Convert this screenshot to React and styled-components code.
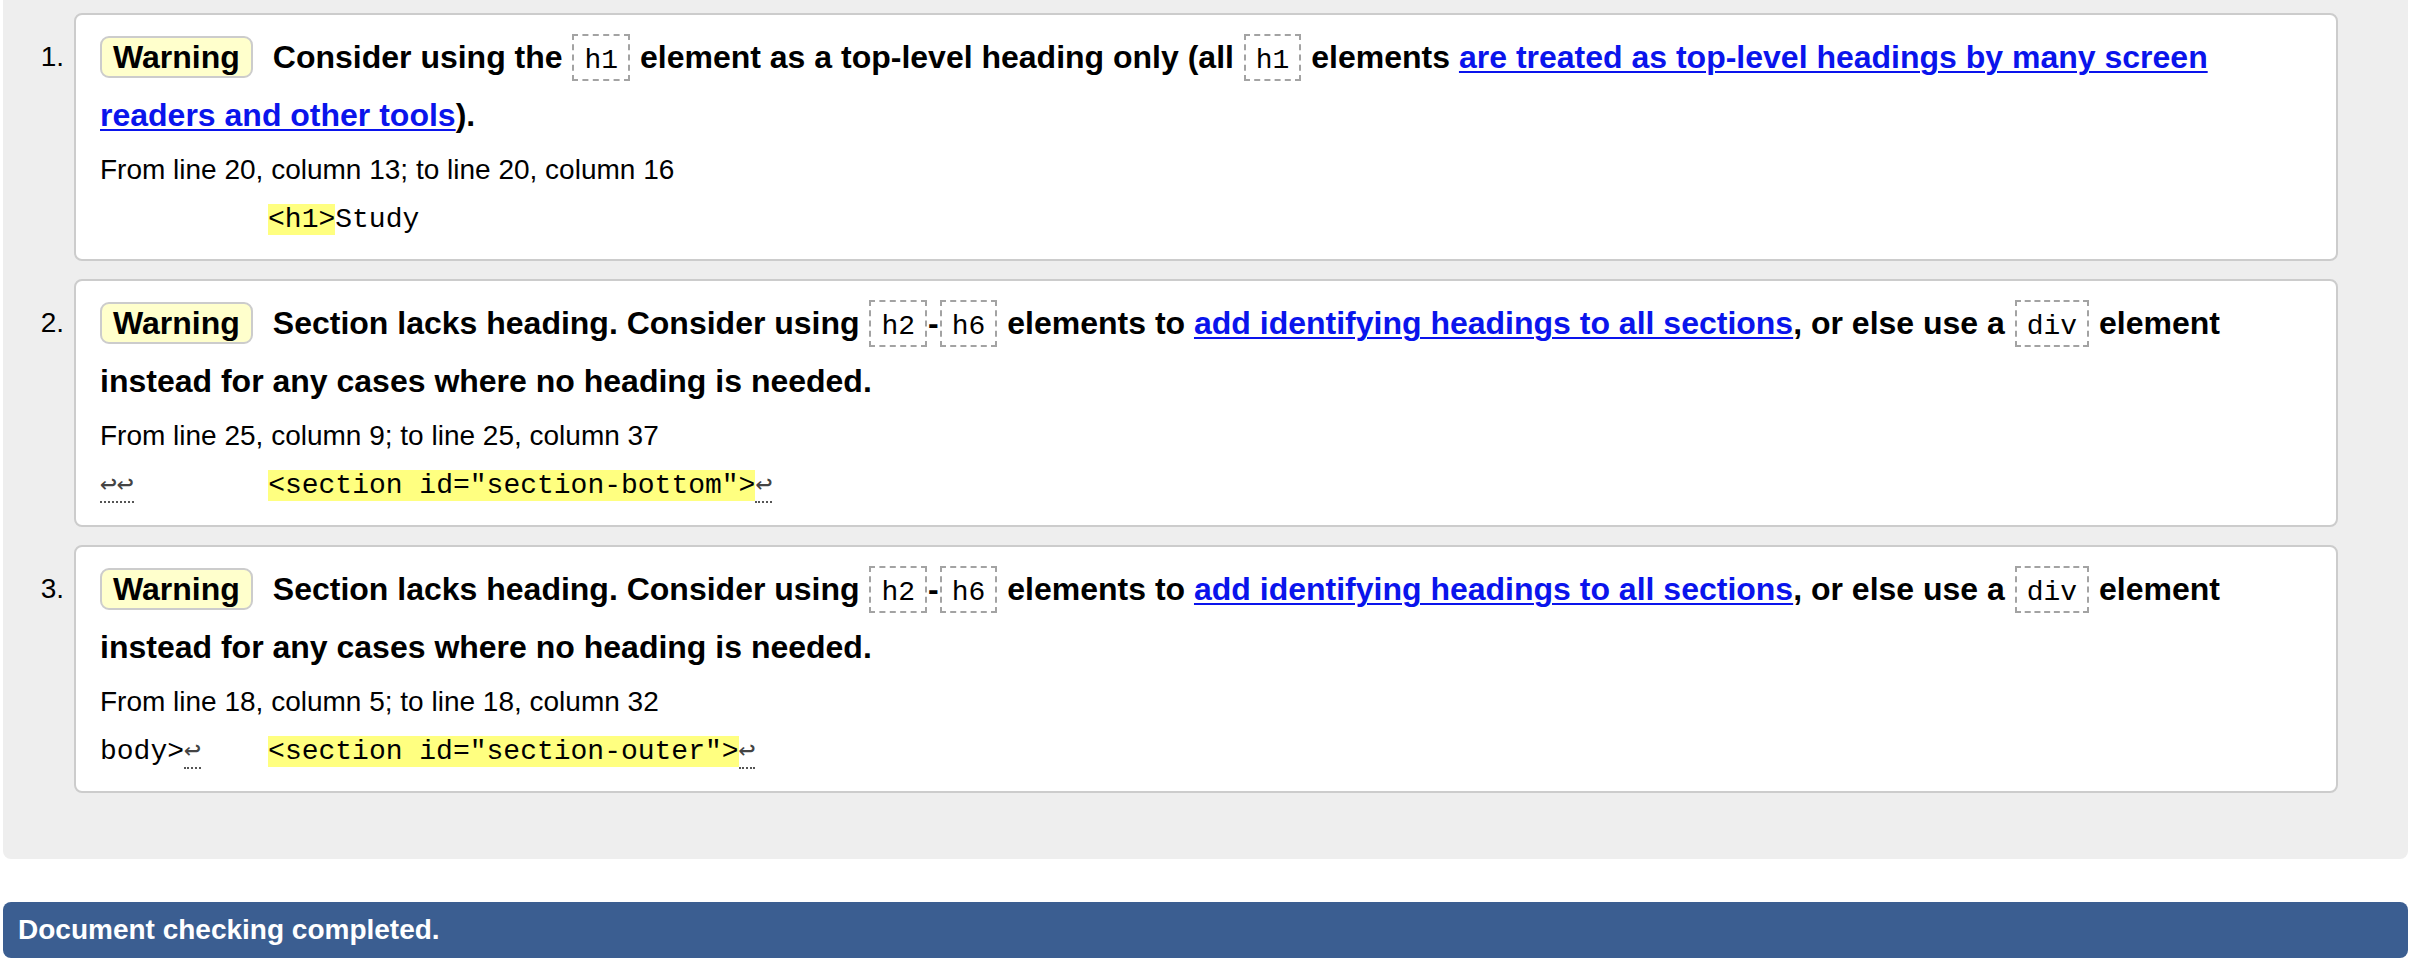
import React from "react";
import styled, { createGlobalStyle } from "styled-components";

const Global = createGlobalStyle`
  html, body { margin: 0; padding: 0; background: #fff; }
  body { font-family: "Liberation Sans", Arial, Helvetica, sans-serif; color: #000; }
`;

const Page = styled.div`
  display: flex;
  flex-direction: column;
  gap: 43px;
`;

const Panel = styled.section`
  margin: 0 4px 0 3px;
  background: #eeeeee;
  border-radius: 0 0 8px 8px;
  padding: 13px 70px 66px 0;
`;

const List = styled.ol`
  list-style: none;
  margin: 0;
  padding: 0;
  display: flex;
  flex-direction: column;
  gap: 18px;
`;

const Item = styled.li`
  display: flex;
  align-items: flex-start;
`;

const Num = styled.div`
  flex: 0 0 71px;
  box-sizing: border-box;
  padding: 15px 10px 0 0;
  text-align: right;
  font-size: 28px;
  line-height: 58px;
`;

const Card = styled.div`
  flex: 1;
  background: #fff;
  border: 2px solid #cccccc;
  border-radius: 8px;
  padding: 13px 40px 19px 24px;
`;

const Message = styled.p`
  margin: 0;
  font-size: 32px;
  font-weight: bold;
  line-height: 58px;
`;

const Badge = styled.span`
  display: inline-block;
  background: #ffffcc;
  border: 2px solid #cccccc;
  border-radius: 9px;
  padding: 1px 11px;
  line-height: 36px;
  margin-right: 20px;
`;

const Code = styled.code`
  font-family: "Liberation Mono", "Courier New", monospace;
  font-weight: normal;
  font-size: 28px;
  line-height: 0;
  border: 2px dashed #a3a3a3;
  padding: 9px 10px 3px;
  margin: 0 1px;
`;

const Link = styled.a`
  color: #0a14ec;
  text-decoration: underline;
  text-underline-offset: 3px;
  text-decoration-thickness: 2px;
`;

const Location = styled.p`
  margin: 6px 0 0;
  font-size: 28px;
  line-height: 40px;
`;

const Extract = styled.p`
  margin: 10px 0 0;
  height: 40px;
  font-family: "Liberation Mono", "DejaVu Sans Mono", "Courier New", monospace;
  font-size: 28px;
  line-height: 40px;
  white-space: pre;
`;

const Mark = styled.b`
  font-weight: normal;
  background: #ffff80;
`;

const Lf = styled.span`
  color: #444;
  line-height: 0;
  border-bottom: 2px dotted #555;
`;

const Footer = styled.div`
  margin: 0 4px 0 3px;
  background: #3b5e91;
  color: #fff;
  border-radius: 8px;
  padding: 12px 15px;
  font-size: 28px;
  font-weight: bold;
  line-height: 32px;
`;

const sectionMsg = (
  <>
    Section lacks heading. Consider using <Code>h2</Code>-<Code>h6</Code> elements to{" "}
    <Link href="#">add identifying headings to all sections</Link>, or else use a{" "}
    <Code>div</Code> element instead for any cases where no heading is needed.
  </>
);

const items = [
  {
    msg: (
      <>
        Consider using the <Code>h1</Code> element as a top-level heading only (all{" "}
        <Code>h1</Code> elements{" "}
        <Link href="#">are treated as top-level headings by many screen readers and other tools</Link>).
      </>
    ),
    loc: "From line 20, column 13; to line 20, column 16",
    extract: (
      <>
        {"          "}
        <Mark>{"<h1>"}</Mark>
        {"Study"}
      </>
    ),
  },
  {
    msg: sectionMsg,
    loc: "From line 25, column 9; to line 25, column 37",
    extract: (
      <>
        <Lf>{"↩↩"}</Lf>
        {"        "}
        <Mark>{'<section id="section-bottom">'}</Mark>
        <Lf>{"↩"}</Lf>
      </>
    ),
  },
  {
    msg: sectionMsg,
    loc: "From line 18, column 5; to line 18, column 32",
    extract: (
      <>
        {"body>"}
        <Lf>{"↩"}</Lf>
        {"    "}
        <Mark>{'<section id="section-outer">'}</Mark>
        <Lf>{"↩"}</Lf>
      </>
    ),
  },
];

export default function App() {
  return (
    <Page>
      <Global />
      <Panel>
        <List>
          {items.map((it, i) => (
            <Item key={i}>
              <Num>{i + 1}.</Num>
              <Card>
                <Message>
                  <Badge>Warning</Badge>
                  {it.msg}
                </Message>
                <Location>{it.loc}</Location>
                <Extract>{it.extract}</Extract>
              </Card>
            </Item>
          ))}
        </List>
      </Panel>
      <Footer>Document checking completed.</Footer>
    </Page>
  );
}
